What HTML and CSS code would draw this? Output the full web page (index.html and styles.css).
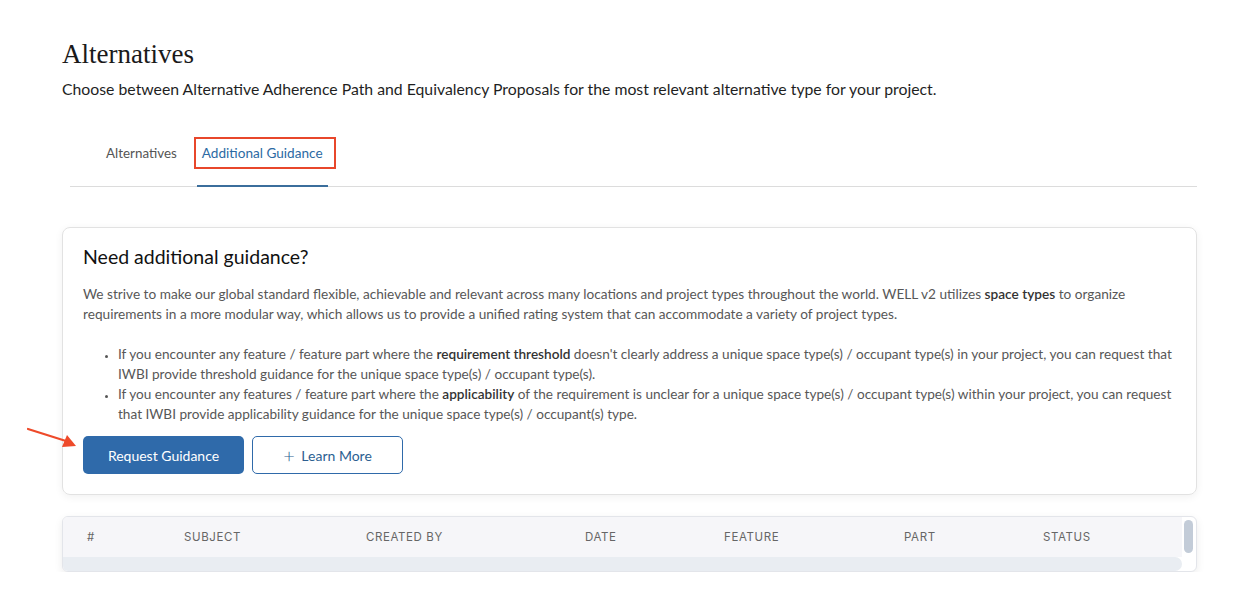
FILE: index.html
```html
<!DOCTYPE html>
<html lang="en">
<head>
    <meta charset="UTF-8">
    <title>Alternatives</title>
    <link rel="stylesheet" href="styles.css">
</head>
<body>

<div class="page">
    <h1 class="page-title">Alternatives</h1>
    <p class="page-sub">Choose between Alternative Adherence Path and Equivalency Proposals for the most relevant alternative type for your project.</p>

    <!-- Tabs -->
    <div class="tabs">
        <div class="tab">Alternatives</div>
        <div class="tab active">Additional Guidance</div>
    </div>

    <!-- Guidance card -->
    <div class="card">
        <h2>Need additional guidance?</h2>
        <p class="intro">We strive to make our global standard flexible, achievable and relevant across many locations and project types throughout the world. WELL v2 utilizes <b>space types</b> to organize requirements in a more modular way, which allows us to provide a unified rating system that can accommodate a variety of project types.</p>
        <ul class="notes">
            <li>If you encounter any feature / feature part where the <b>requirement threshold</b> doesn't clearly address a unique space type(s) / occupant type(s) in your project, you can request that IWBI provide threshold guidance for the unique space type(s) / occupant type(s).</li>
            <li>If you encounter any features / feature part where the <b>applicability</b> of the requirement is unclear for a unique space type(s) / occupant type(s) within your project, you can request that IWBI provide applicability guidance for the unique space type(s) / occupant(s) type.</li>
        </ul>
        <div class="actions">
            <svg class="arrow" width="56" height="24" viewBox="0 0 56 24">
                <line x1="2" y1="2" x2="40" y2="14" stroke="#ee4a2a" stroke-width="2.2" stroke-linecap="round"/>
                <polygon points="50,19 36,20 41,8" fill="#ee4a2a"/>
            </svg>
            <button class="btn btn-primary">Request Guidance</button>
            <button class="btn btn-outline"><span class="plus">+</span> Learn More</button>
        </div>
    </div>

    <!-- Requests table -->
    <div class="table">
        <div class="table-head">
            <div class="col c-num">#</div>
            <div class="col c-subject">Subject</div>
            <div class="col c-created">Created by</div>
            <div class="col c-date">Date</div>
            <div class="col c-feature">Feature</div>
            <div class="col c-part">Part</div>
            <div class="col c-status">Status</div>
        </div>
        <div class="table-foot"></div>
        <div class="scrollbar"></div>
    </div>
</div>

</body>
</html>
```

FILE: styles.css
```css
body {
    margin: 0;
    background: #fff;
    font-family: Lato, "Open Sans", sans-serif;
    color: #222;
}

.page {
    padding: 36px 55px 0 62px;
}

.page-title {
    margin: 0;
    font-family: "Liberation Serif", serif;
    font-weight: normal;
    font-size: 27px;
    line-height: 36px;
    color: #1a1a1a;
}

.page-sub {
    margin: 6px 0 0;
    font-size: 15.8px;
    line-height: 22px;
    color: #1f1f1f;
}

.tabs {
    display: flex;
    margin: 29px 0 0 8px;
    padding-left: 36px;
    border-bottom: 1px solid #dcdcdc;
}

.tab {
    padding: 15px 0 24px;
    margin-right: 20px;
    font-size: 13.4px;
    line-height: 18px;
    color: #555;
}

.tab.active {
    position: relative;
    color: #2c6aa3;
    border-bottom: 2px solid #3b6e9c;
    margin-bottom: -1px;
    padding: 15px 5px 22px;
    font-size: 13.6px;
}

/* red annotation box */
.tab.active::after {
    content: "";
    position: absolute;
    left: -3px;
    top: 8px;
    width: 138px;
    height: 28px;
    border: 2px solid #e8472b;
}

.card {
    margin-top: 40px;
    padding: 16px 20px 20px;
    border: 1px solid #e2e2e2;
    border-radius: 8px;
    box-shadow: 0 2px 8px rgba(0, 0, 0, 0.06);
}

.card h2 {
    margin: 0;
    font-weight: normal;
    font-size: 19.5px;
    line-height: 26px;
    color: #111;
}

.intro {
    margin: 14px 0 0;
    font-size: 13.65px;
    line-height: 20px;
    color: #575757;
}

.card b {
    font-weight: 600;
    color: #333;
}

.notes {
    margin: 20px 0 0;
    padding-left: 35px;
    font-size: 13.6px;
    line-height: 20px;
    color: #575757;
}

.notes li::marker {
    font-size: 10px;
}

.actions {
    position: relative;
    display: flex;
    gap: 8px;
    margin-top: 12px;
}

.arrow {
    position: absolute;
    left: -57px;
    top: -9px;
}

.btn {
    height: 38px;
    border-radius: 5px;
    font-family: Lato, sans-serif;
    font-size: 14px;
    cursor: pointer;
}

.btn-primary {
    width: 161px;
    background: #2f6aaa;
    color: #fff;
    border: none;
}

.btn-outline {
    width: 151px;
    background: #fff;
    color: #2d5f91;
    border: 1px solid #2f6aaa;
}

.plus {
    font-size: 20px;
    font-weight: 300;
    vertical-align: -2px;
    margin-right: 3px;
}

.table {
    position: relative;
    margin-top: 21px;
    border: 1px solid #e3e5ea;
    border-radius: 6px;
    background: #fff;
    box-shadow: 0 3px 8px rgba(0, 0, 0, 0.08);
    overflow: hidden;
}

.table-head {
    display: flex;
    height: 40px;
    align-items: center;
    background: #f6f6f9;
    font-family: Inter, sans-serif;
    font-size: 11.5px;
    letter-spacing: 0.6px;
    text-transform: uppercase;
    color: #666;
    margin-right: 14px;
}

.col { flex: none; }
.c-num { width: 97px; padding-left: 24px; }
.c-subject { width: 182px; }
.c-created { width: 219px; }
.c-date { width: 139px; }
.c-feature { width: 180px; }
.c-part { width: 139px; }

.table-foot {
    height: 14px;
    background: #e9edf2;
    margin-right: 14px;
    border-radius: 0 7px 7px 0;
}

.scrollbar {
    position: absolute;
    right: 3px;
    top: 3px;
    width: 9px;
    height: 33px;
    border-radius: 5px;
    background: #c3ccd8;
}
```
